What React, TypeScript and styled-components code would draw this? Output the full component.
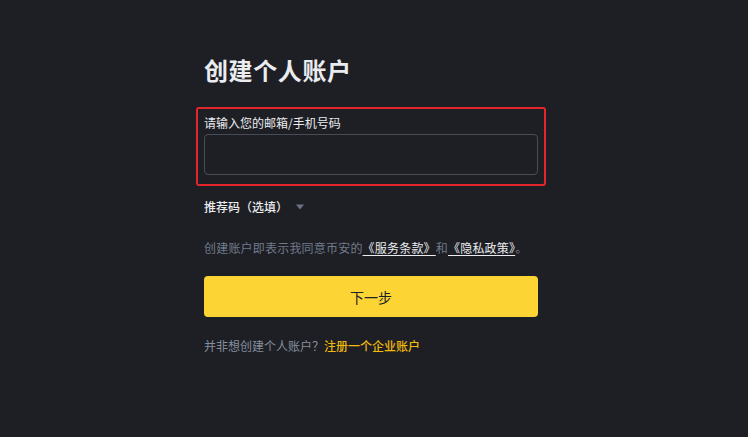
import styled, { createGlobalStyle } from 'styled-components';

const GlobalStyle = createGlobalStyle`
    html, body {
        margin: 0;
        padding: 0;
        background-color: #1e1f25;
    }
    body {
        font-family: 'Noto Sans CJK SC', 'Noto Sans', sans-serif;
    }
`;

const App = () => (
    <>
        <GlobalStyle />
        <Page>
            <Form>
                <Title>创建个人账户</Title>
                <HighlightBox>
                    <Label>请输入您的邮箱/手机号码</Label>
                    <Input type="text" />
                </HighlightBox>
                <Referral>
                    推荐码（选填）
                    <Caret viewBox="0 0 8 6" aria-hidden>
                        <path d="M0 0.5h8L4 5.5z" fill="#6b7280" />
                    </Caret>
                </Referral>
                <Terms>
                    创建账户即表示我同意币安的<TermLink>《服务条款》</TermLink>和<TermLink>《隐私政策》</TermLink>。
                </Terms>
                <PrimaryButton>下一步</PrimaryButton>
                <Footer>
                    并非想创建个人账户？<FooterLink>注册一个企业账户</FooterLink>
                </Footer>
            </Form>
        </Page>
    </>
);

export default App;


const Page = styled.div`
    width: 748px;
    height: 437px;
    box-sizing: border-box;
    padding: 54px 0 0 204px;
    background-color: #1e1f25;
`;

const Form = styled.div`
    width: 334px;
    display: flex;
    flex-direction: column;
`;

const Title = styled.h1`
    margin: 0;
    font-size: 24px;
    line-height: 32px;
    font-weight: 700;
    letter-spacing: 0.6px;
    color: #eaecef;
`;

const HighlightBox = styled.div`
    margin: 21px -8px 0;
    padding: 5px 6px 9px;
    border: 2px solid #e3262b;
    border-radius: 3px;
    display: flex;
    flex-direction: column;
    gap: 3px;
`;

const Label = styled.label`
    font-size: 12px;
    line-height: 17px;
    color: #eaecef;
`;

const Input = styled.input`
    height: 41px;
    box-sizing: border-box;
    margin: 0;
    padding: 0 12px;
    border: 1px solid #474d57;
    border-radius: 4px;
    background: transparent;
    color: #eaecef;
    font-size: 14px;
    outline: none;
`;

const Referral = styled.div`
    margin-top: 12px;
    display: flex;
    align-items: center;
    gap: 8px;
    font-size: 12px;
    line-height: 17px;
    font-weight: 500;
    color: #eaecef;
`;

const Caret = styled.svg`
    width: 8px;
    height: 6px;
`;

const Terms = styled.p`
    margin: 24px 0 0;
    font-size: 12px;
    line-height: 17px;
    letter-spacing: 0.2px;
    color: #707a8a;
`;

const TermLink = styled.a`
    color: #eaecef;
    text-decoration: underline;
    text-underline-offset: 2px;
    cursor: pointer;
`;

const PrimaryButton = styled.button`
    margin-top: 20px;
    height: 41px;
    border: none;
    border-radius: 4px;
    background-color: #fcd535;
    color: #1e2026;
    font-family: inherit;
    font-size: 14px;
    cursor: pointer;
`;

const Footer = styled.p`
    margin: 20px 0 0;
    font-size: 12px;
    line-height: 17px;
    color: #848e9c;
`;

const FooterLink = styled.a`
    color: #f0b90b;
    font-weight: 500;
    cursor: pointer;
`;
